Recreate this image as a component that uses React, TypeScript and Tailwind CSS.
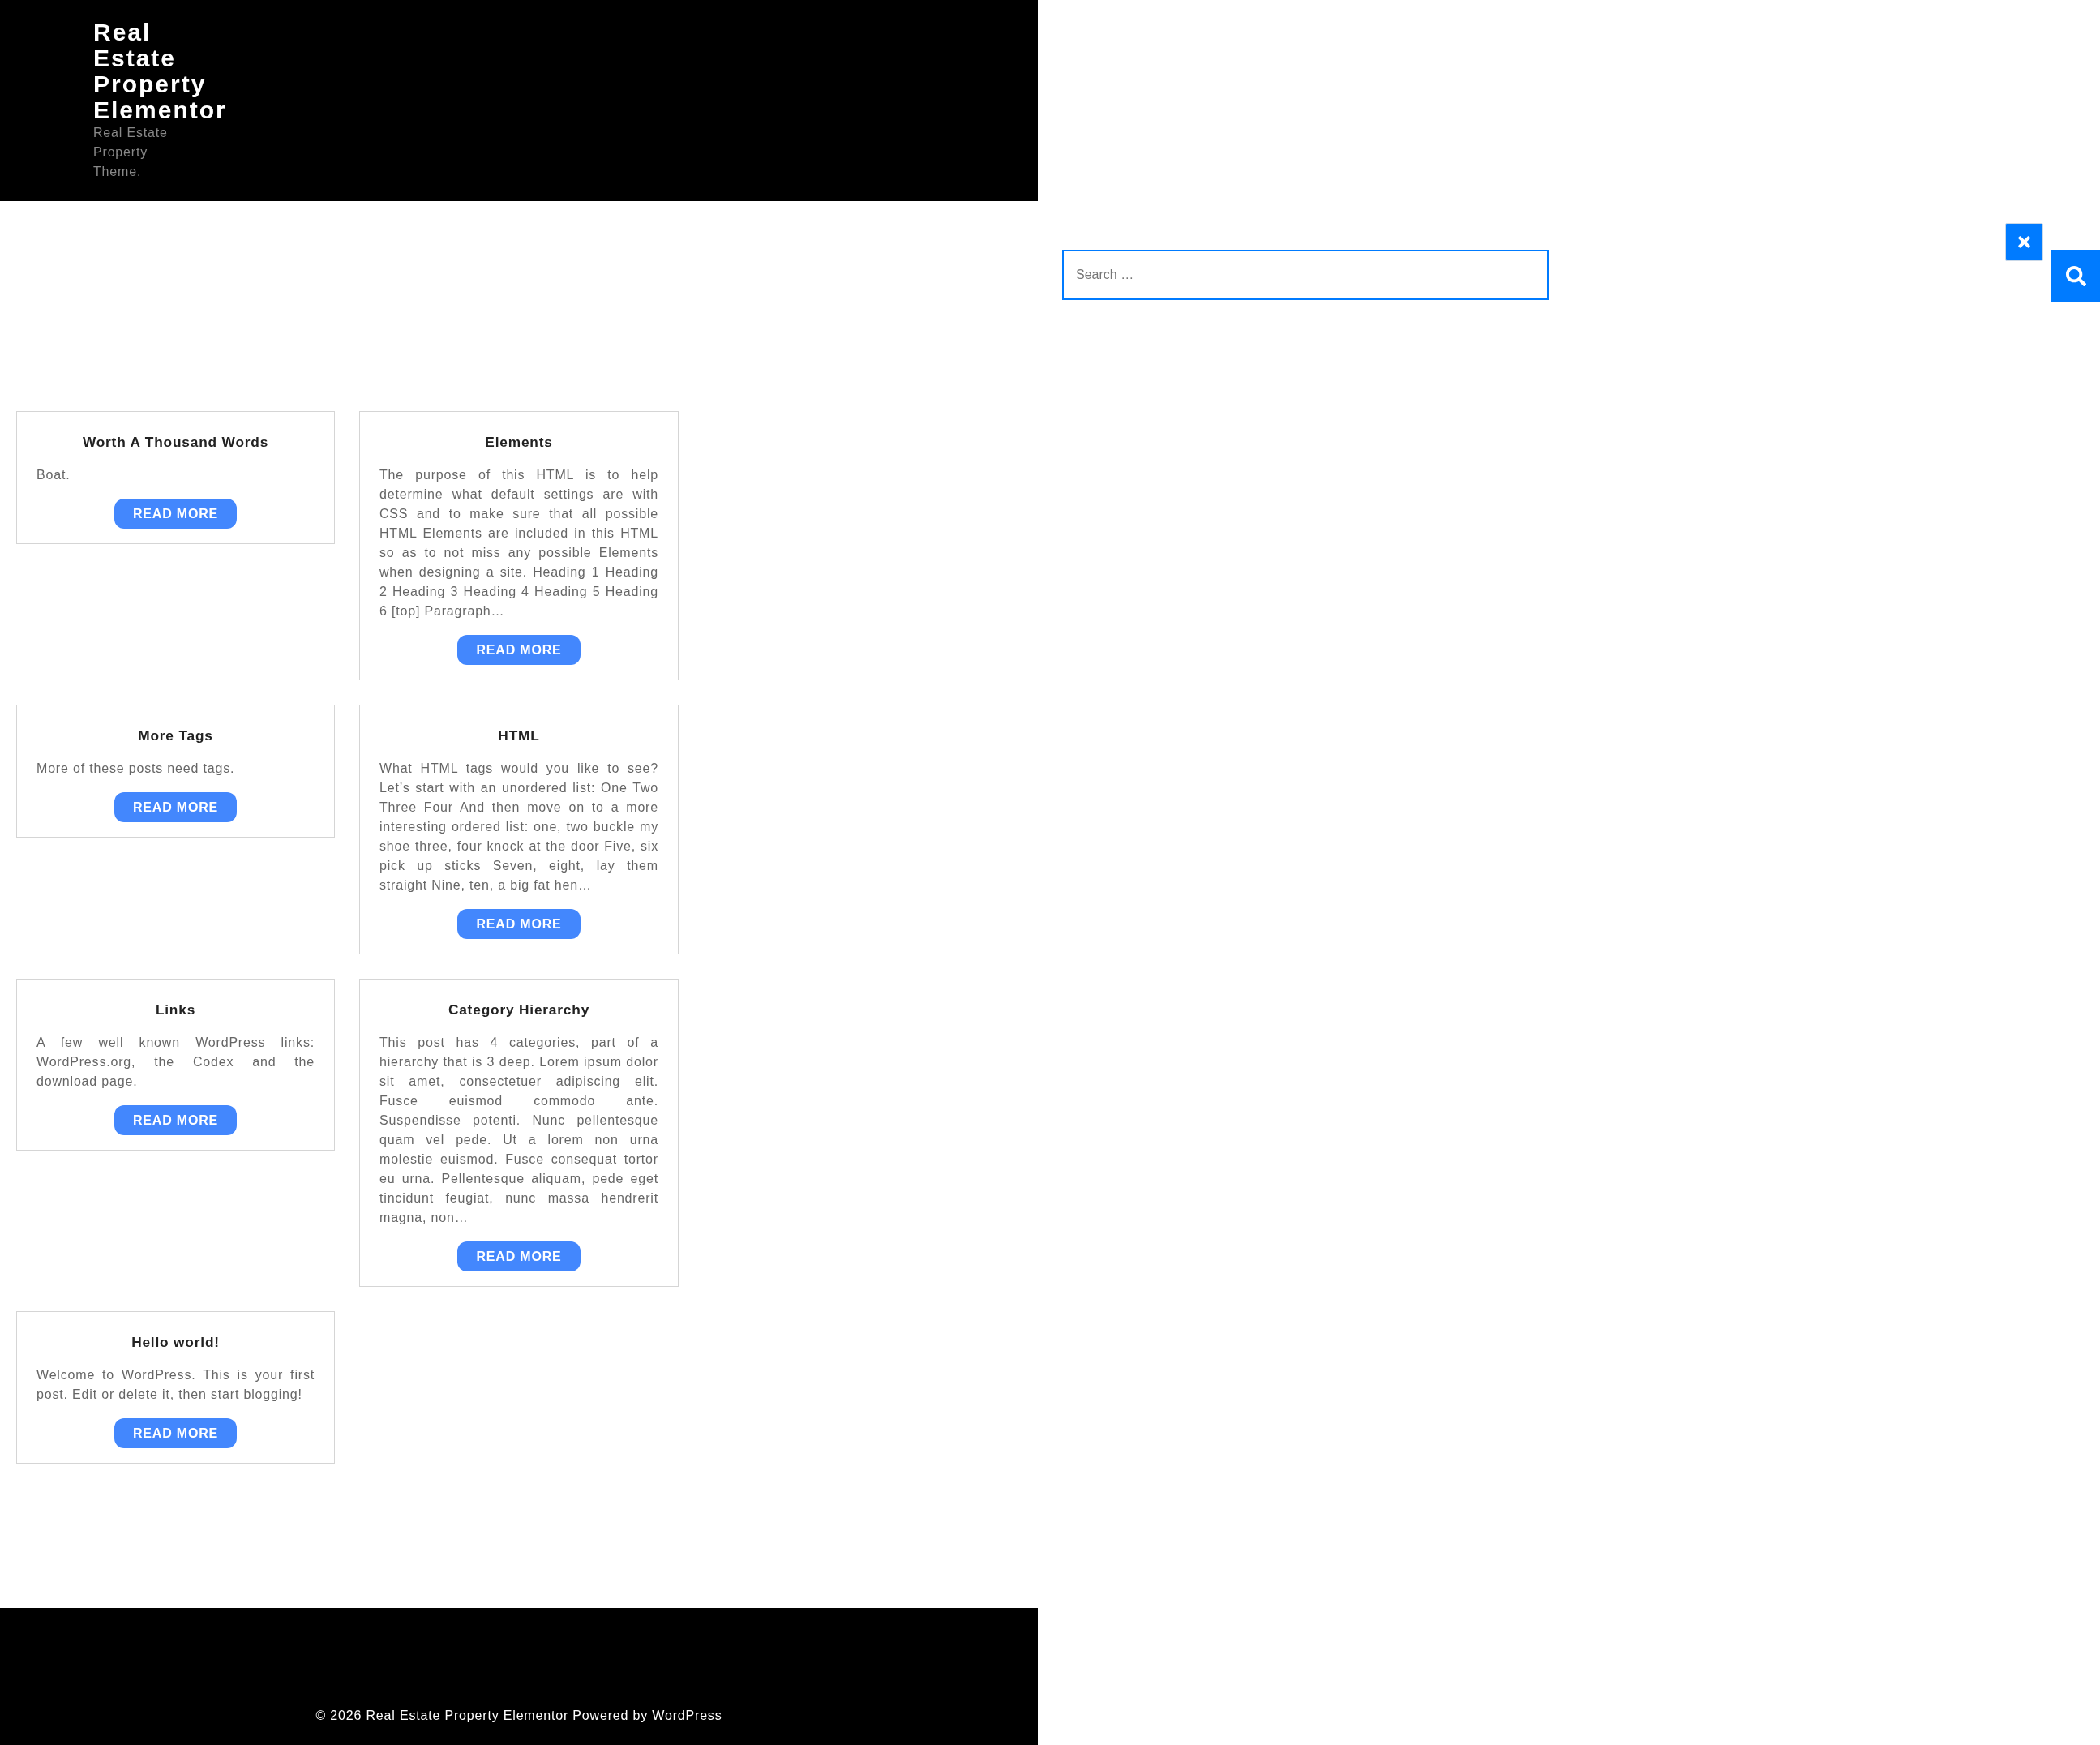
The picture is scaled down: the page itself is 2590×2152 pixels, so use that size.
import { FaSearch, FaTimes } from 'react-icons/fa'

const posts = [
  { title: 'Worth A Thousand Words', text: 'Boat.' },
  {
    title: 'Elements',
    text: 'The purpose of this HTML is to help determine what default settings are with CSS and to make sure that all possible HTML Elements are included in this HTML so as to not miss any possible Elements when designing a site. Heading 1 Heading 2 Heading 3 Heading 4 Heading 5 Heading 6 [top] Paragraph…',
  },
  { title: 'More Tags', text: 'More of these posts need tags.' },
  {
    title: 'HTML',
    text: 'What HTML tags would you like to see? Let’s start with an unordered list: One Two Three Four And then move on to a more interesting ordered list: one, two buckle my shoe three, four knock at the door Five, six pick up sticks Seven, eight, lay them straight Nine, ten, a big fat hen…',
  },
  { title: 'Links', text: 'A few well known WordPress links: WordPress.org, the Codex and the download page.' },
  {
    title: 'Category Hierarchy',
    text: 'This post has 4 categories, part of a hierarchy that is 3 deep. Lorem ipsum dolor sit amet, consectetuer adipiscing elit. Fusce euismod commodo ante. Suspendisse potenti. Nunc pellentesque quam vel pede. Ut a lorem non urna molestie euismod. Fusce consequat tortor eu urna. Pellentesque aliquam, pede eget tincidunt feugiat, nunc massa hendrerit magna, non…',
  },
  {
    title: 'Hello world!',
    text: 'Welcome to WordPress. This is your first post. Edit or delete it, then start blogging!',
  },
]

function PostCard({ title, text }: { title: string; text: string }) {
  return (
    <article className="flex flex-col items-center border border-[#d5d5d5] px-[24px] pt-[24px] pb-[18px]">
      <h2 className="mb-[15px] text-[17.3px] leading-[27px] font-bold text-[#222222]">{title}</h2>
      <p className="mb-[17px] w-full text-justify text-[16px] leading-[24px] text-[#666666]">{text}</p>
      <a className="rounded-[12px] bg-[#4387fd] px-[23px] py-[9px] text-[16px] leading-[19px] font-bold text-white">
        READ MORE
      </a>
    </article>
  )
}

export default function App() {
  return (
    <div className="relative min-h-[2152px] overflow-hidden font-['Liberation_Sans',Arial,sans-serif] tracking-[0.82px] will-change-transform">
      <div className="flex min-h-[2152px] w-[1280px] flex-col">
        <header className="h-[248px] bg-black pt-[24px] pl-[115px]">
          <h1 className="w-[170px] text-[30px] leading-[32px] font-bold tracking-[2px] text-white">
            Real Estate Property Elementor
          </h1>
          <p className="w-[120px] text-[16px] leading-[24px] text-[#888888]">Real Estate Property Theme.</p>
        </header>

        <main className="flex-1 pt-[259px] pl-[20px]">
          <div className="grid w-[817px] grid-cols-[393px_394px] items-start gap-x-[30px] gap-y-[30px]">
            {posts.map((post) => (
              <PostCard key={post.title} title={post.title} text={post.text} />
            ))}
          </div>
        </main>

        <footer className="flex h-[169px] items-end justify-center bg-black pb-[24px] text-[16px] leading-[24px] text-white">
          © 2026 Real Estate Property Elementor Powered by WordPress
        </footer>
      </div>

      <input
        placeholder="Search …"
        className="absolute top-[308px] left-[1310px] h-[62px] w-[600px] border-2 border-[#007bff] px-[15px] text-[16px] tracking-normal outline-none placeholder:text-[#757575]"
      />
      <button className="absolute top-[275px] left-[2473px] flex h-[47px] w-[47px] items-center justify-center rounded-[2px] border border-[#c9d8e8] bg-[#007bff] text-[21px] text-white">
        <FaTimes />
      </button>
      <button className="absolute top-[308px] left-[2530px] flex h-[65px] w-[60px] items-center justify-center bg-[#007bff] text-[25px] text-white">
        <FaSearch />
      </button>
    </div>
  )
}
